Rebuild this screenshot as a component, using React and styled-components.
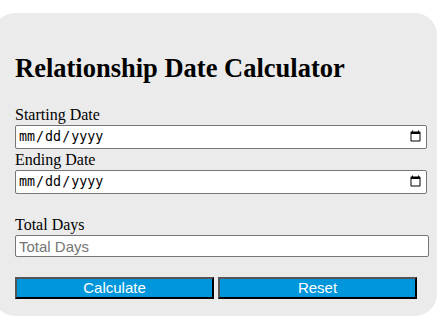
import styled, { createGlobalStyle } from "styled-components";

const Global = createGlobalStyle`
  html, body {
    margin: 0;
    background: #fff;
    font-family: "Liberation Serif", "Times New Roman", serif;
  }
`;

const Card = styled.div`
  margin: 13px 0 0 -7px;
  width: 444px;
  height: 303px;
  box-sizing: border-box;
  padding: 0 0 0 22px;
  background: #ebebeb;
  border-radius: 22px;
  overflow: hidden;
`;

const Title = styled.h2`
  margin: 0;
  padding-top: 40px;
  font-size: 26.5px;
  line-height: 30px;
  font-weight: bold;
  color: #000;
`;

const Form = styled.div`
  display: flex;
  flex-direction: column;
  align-items: flex-start;
  margin-top: 23px;
`;

const Label = styled.label`
  display: block;
  font-size: 16px;
  line-height: 18px;
  color: #000;
  margin-top: ${(p) => p.$top || 0}px;
`;

const DateInput = styled.input`
  box-sizing: border-box;
  width: 412px;
  height: 24px;
  margin: 1px 0 0;
  padding: 1px 2px;
  border: 1px solid #767676;
  border-radius: 2px;
  background: #fff;
  font-size: 13.33px;
`;

const TextInput = styled.input`
  box-sizing: border-box;
  width: 414px;
  height: 22px;
  margin: 1px 0 0;
  padding: 1px 3px;
  border: 1px solid #767676;
  border-radius: 2px;
  background: #fff;
  font-family: "Liberation Sans", Arial, sans-serif;
  font-size: 15px;
  &::placeholder {
    color: #757575;
  }
`;

const Buttons = styled.div`
  display: flex;
  gap: 4px;
  margin-top: 20px;
`;

const Button = styled.button`
  box-sizing: border-box;
  width: 199px;
  height: 22px;
  padding: 0;
  background: #0096dc;
  color: #fff;
  border: 2px outset #3a3a3a;
  border-color: #555 #000 #000 #555;
  font-family: "Liberation Sans", Arial, sans-serif;
  font-size: 15px;
  line-height: 18px;
  cursor: pointer;
`;

export default function App() {
  return (
    <>
      <Global />
      <Card>
        <Title>Relationship Date Calculator</Title>
        <Form>
          <Label>Starting Date</Label>
          <DateInput type="date" />
          <Label $top={2}>Ending Date</Label>
          <DateInput type="date" />
          <Label $top={22}>Total Days</Label>
          <TextInput type="text" placeholder="Total Days" />
          <Buttons>
            <Button>Calculate</Button>
            <Button>Reset</Button>
          </Buttons>
        </Form>
      </Card>
    </>
  );
}
